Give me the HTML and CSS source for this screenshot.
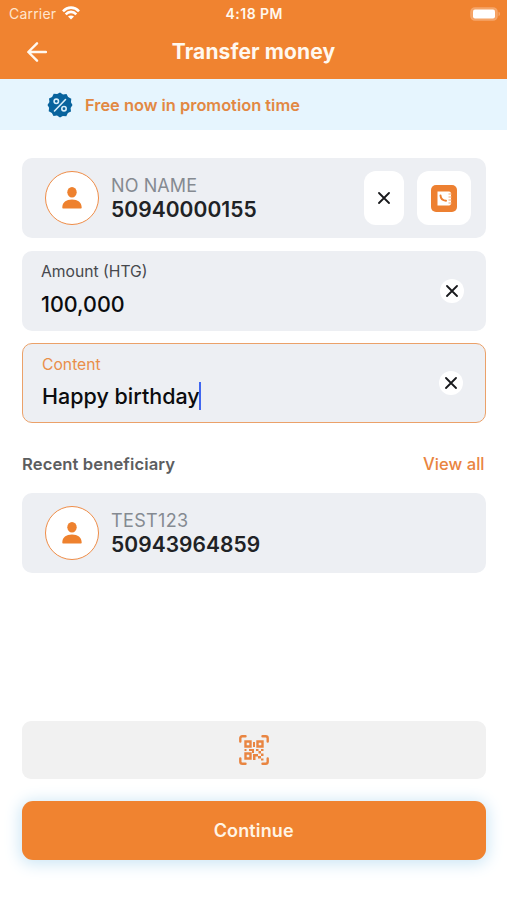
FILE: index.html
```html
<!DOCTYPE html>
<html lang="en">
<head>
<meta charset="utf-8">
<title>Transfer money</title>
<link rel="stylesheet" href="styles.css">
</head>
<body>
<svg class="defs" width="0" height="0" aria-hidden="true">
  <symbol id="person" viewBox="0 0 20 22"><ellipse cx="10" cy="5.2" rx="4.7" ry="5.2"/><path d="M.3 20.500c0-5.200 4-8 9.700-8s9.700 2.800 9.700 8c0 .7-.4 1-1 1H1.300c-.6 0-1-.3-1-1Z"/></symbol>
  <symbol id="cross" viewBox="0 0 12 12"><path d="m1 1 10 10M11 1 1 11"/></symbol>
</svg>
<div class="screen">
  <header class="top">
    <div class="status">
      <div class="carrier"><span>Carrier</span>
        <svg class="wifi" viewBox="0 0 18 14"><path d="M1 5.300C5.700.4 12.300.4 17 5.300M3.700 8.300c3.100-3.200 7.500-3.200 10.600 0"/><path class="dot" d="m9 13.500 3-3c-1.700-1.500-4.300-1.500-6 0Z"/></svg>
      </div>
      <span class="clock">4:18 PM</span>
      <svg class="battery" viewBox="0 0 31 14"><rect class="case" x="1" y="1" width="26" height="12" rx="4"/><rect class="charge" x="3" y="2.500" width="22" height="9" rx="2"/><path class="cap" d="M28.500 4.800c2 .6 2 3.800 0 4.400Z"/></svg>
    </div>
    <div class="navbar">
      <svg class="back" viewBox="0 0 20 20"><path d="M19 10H1.500M10 1.300 1.300 10l8.700 8.700"/></svg>
      <h1>Transfer money</h1>
    </div>
  </header>
  <div class="promo">
    <svg class="badge" viewBox="0 0 26 26"><path d="M13 .5l3 1.900 3.500-.4 1.600 3.100 3.200 1.600-.4 3.500L25.500 13l-1.900 3 .4 3.500-3.100 1.600-1.600 3.200-3.500-.4-2.800 1.600-3-1.900-3.500.4-1.600-3.100-3.200-1.600.4-3.500L.5 13l1.900-3L2 6.500l3.100-1.600 1.600-3.200 3.500.4Z"/><g class="percent"><path d="m18.500 7.500-11 11.500"/><circle cx="9.300" cy="9.300" r="2.200"/><circle cx="17" cy="16.700" r="2.200"/></g></svg>
    <span>Free now in promotion time</span>
  </div>
  <main>
    <section class="card contact">
      <div class="avatar"><svg><use href="#person"/></svg></div>
      <div class="person"><span class="name">NO NAME</span><span class="phone">50940000155</span></div>
      <button class="tile narrow" aria-label="Clear"><svg class="cross"><use href="#cross"/></svg></button>
      <button class="tile" aria-label="Contacts">
        <svg class="book" viewBox="0 0 26 27"><rect class="cover" width="26" height="27" rx="5"/><path class="page" d="M6.500 6.500h11.500a2 2 0 0 1 2 2v10a2 2 0 0 1-2 2H6.500Z"/><path class="rings" d="M17.500 9h3.500M17.500 12h3.500M17.500 15h3.500M17.500 18h3.500"/><path class="call" d="M9.500 10.500c.2 3.200 2 5 5.500 5.200"/></svg>
      </button>
    </section>
    <section class="card field">
      <div class="entry"><label>Amount (HTG)</label><div class="value">100,000</div></div>
      <button class="clear" aria-label="Clear"><svg class="cross"><use href="#cross"/></svg></button>
    </section>
    <section class="card field active">
      <div class="entry"><label>Content</label><div class="value"><span>Happy birthday</span><i class="caret"></i></div></div>
      <button class="clear" aria-label="Clear"><svg class="cross"><use href="#cross"/></svg></button>
    </section>
    <div class="heading"><h2>Recent beneficiary</h2><a>View all</a></div>
    <section class="card contact">
      <div class="avatar"><svg><use href="#person"/></svg></div>
      <div class="person"><span class="name test">TEST123</span><span class="phone">50943964859</span></div>
    </section>
    <button class="scan" aria-label="Scan QR code">
      <svg viewBox="0 0 30 30"><path class="corners" d="M1.300 6.500V3.300q0-2 2-2h3.200M23.500 1.300h3.200q2 0 2 2v3.200M1.300 23.500v3.200q0 2 2 2h3.200M23.500 28.700h3.200q2 0 2-2v-3.200"/><path class="finders" d="M6.500 6.500h5v5h-5ZM18.500 6.500h5v5h-5ZM6.500 18.500h5v5h-5Z"/><path class="bits" d="M14 7h2v5h-2ZM5.500 14h2v2h-2ZM10 14h5v4h-2v-2h-3ZM17 14h2.500v2H17ZM22 14h2.500v2H22ZM19.500 16H22v2.500h-2.500ZM14 19h5v2.500h-2.500V25H14ZM22 18.500h2.500V21H22ZM19 21h3v2.500h-3ZM22 23.500h2.500v2H22Z"/></svg>
    </button>
    <button class="continue">Continue</button>
  </main>
</div>
</body>
</html>
```
FILE: styles.css
```css
* { box-sizing: border-box; }
body { margin: 0; background: #fff; font-family: Inter, "Liberation Sans", sans-serif; }
button { border: 0; padding: 0; font-family: inherit; }
h1, h2 { margin: 0; }
svg { display: block; flex: none; }
.defs { position: absolute; }
.screen { width: 507px; height: 900px; overflow: hidden; display: flex; flex-direction: column; }

.top { height: 79px; background: #f08330; color: #fff8ef; flex: none; }
.status { height: 28px; padding: 0 6px 0 9px; display: grid; grid-template-columns: 1fr auto 1fr; align-items: center; font-size: 14px; line-height: 28px; }
.carrier { display: flex; gap: 6px; align-items: center; color: #ffe5cd; letter-spacing: .2px; }
.wifi { width: 18px; height: 14px; fill: none; stroke: #fff; stroke-width: 2.6; margin-top: -2px; }
.wifi .dot { fill: #fff; stroke: none; }
.clock { font-weight: 600; letter-spacing: .45px; margin-right: 1.5px; }
.battery { width: 31px; height: 14px; justify-self: end; margin-top: -1px; }
.case { fill: #f5a263; stroke: #f5a66b; stroke-width: 1.6; }
.charge { fill: #fff; }
.cap { fill: #f5a66b; }
.navbar { height: 47px; display: grid; grid-template-columns: 54px 1fr 54px; align-items: center; }
.back { width: 20px; height: 20px; margin-left: 27px; margin-top: 1px; fill: none; stroke: #fff8ef; stroke-width: 2.4; stroke-linecap: round; stroke-linejoin: round; }
h1 { text-align: center; font-size: 21px; font-weight: 700; line-height: 28px; letter-spacing: .1px; }

.promo { height: 51px; flex: none; background: #e6f5fe; color: #e28843; display: flex; align-items: center; gap: 12px; padding-left: 47px; font-size: 16.4px; font-weight: 600; }
.badge { width: 26px; height: 26px; fill: #08639d; }
.percent { fill: none; stroke: #d9effb; stroke-width: 1.6; stroke-linecap: round; }

main { flex: 1; padding: 28px 21.5px 40px 22px; display: flex; flex-direction: column; }
.card { height: 80px; flex: none; background: #edeff3; border-radius: 10px; display: flex; align-items: center; }
.contact { padding: 0 15px 0 23px; }
.avatar { width: 54px; height: 54px; flex: none; border: 1.5px solid #ef8d48; border-radius: 50%; background: #fff; display: flex; align-items: center; justify-content: center; }
.avatar svg { width: 20px; height: 22px; fill: #ee812e; }
.person { flex: 1; margin-left: 12px; display: flex; flex-direction: column; }
.name { color: #858a91; font-size: 18px; line-height: 24px; letter-spacing: .1px; }
.test { letter-spacing: .35px; }
.phone { color: #202225; font-size: 21px; line-height: 24px; font-weight: 600; letter-spacing: .05px; }
.tile { width: 54px; height: 54px; margin-left: 13px; border-radius: 12px; background: #fff; display: flex; align-items: center; justify-content: center; }
.narrow { width: 40px; }
.cross { width: 12px; height: 12px; fill: none; stroke: #18191c; stroke-width: 1.8; stroke-linecap: round; }
.book { width: 26px; height: 27px; }
.cover { fill: #ed8031; }
.page { fill: #fff; }
.rings { stroke: #f4a66d; stroke-width: 1.2; }
.call { fill: none; stroke: #ed8031; stroke-width: 2; stroke-linecap: round; }

.field { margin-top: 13px; padding: 0 22px 0 19px; }
.entry { flex: 1; height: 60px; padding-top: 1px; display: flex; flex-direction: column; }
label { color: #46484d; font-size: 15.7px; line-height: 20px; }
.value { color: #0b0c0e; font-size: 21.5px; font-weight: 500; line-height: 28px; margin-top: 8px; display: flex; align-items: center; }
.clear { width: 24px; height: 24px; border-radius: 50%; background: #fff; display: flex; align-items: center; justify-content: center; }
.clear .cross { width: 12px; height: 12px; }
.active { margin-top: 12px; border: 1.5px solid #eba169; }
.active .entry { padding-top: 2px; }
.active .value { margin-top: 7px; }
.active label { color: #e98e4a; }
.caret { width: 2px; height: 28px; margin-left: -1px; background: #4167f0; }
.heading { height: 70px; display: flex; align-items: center; justify-content: space-between; padding-top: 12px; flex: none; }
h2, .heading a { font-size: 16.6px; line-height: 22px; }
h2 { font-weight: 600; color: #5c5d60; letter-spacing: .1px; }
.heading a { font-weight: 500; color: #e98440; margin-right: 1px; }

.scan { height: 58px; flex: none; margin-top: auto; border-radius: 9px; background: #f1f1f1; display: flex; align-items: center; justify-content: center; }
.scan svg { width: 30px; height: 30px; }
.corners, .finders { fill: none; stroke: #e98541; stroke-width: 2.4; stroke-linecap: round; }
.finders { stroke-linecap: butt; }
.bits { fill: #e98541; }
.continue { height: 59px; flex: none; margin-top: 22px; border-radius: 11px; background: #f08330; color: #fff4e5; font-size: 18px; font-weight: 600; letter-spacing: .15px; box-shadow: 0 2px 16px 2px #cce6f5; }
```
